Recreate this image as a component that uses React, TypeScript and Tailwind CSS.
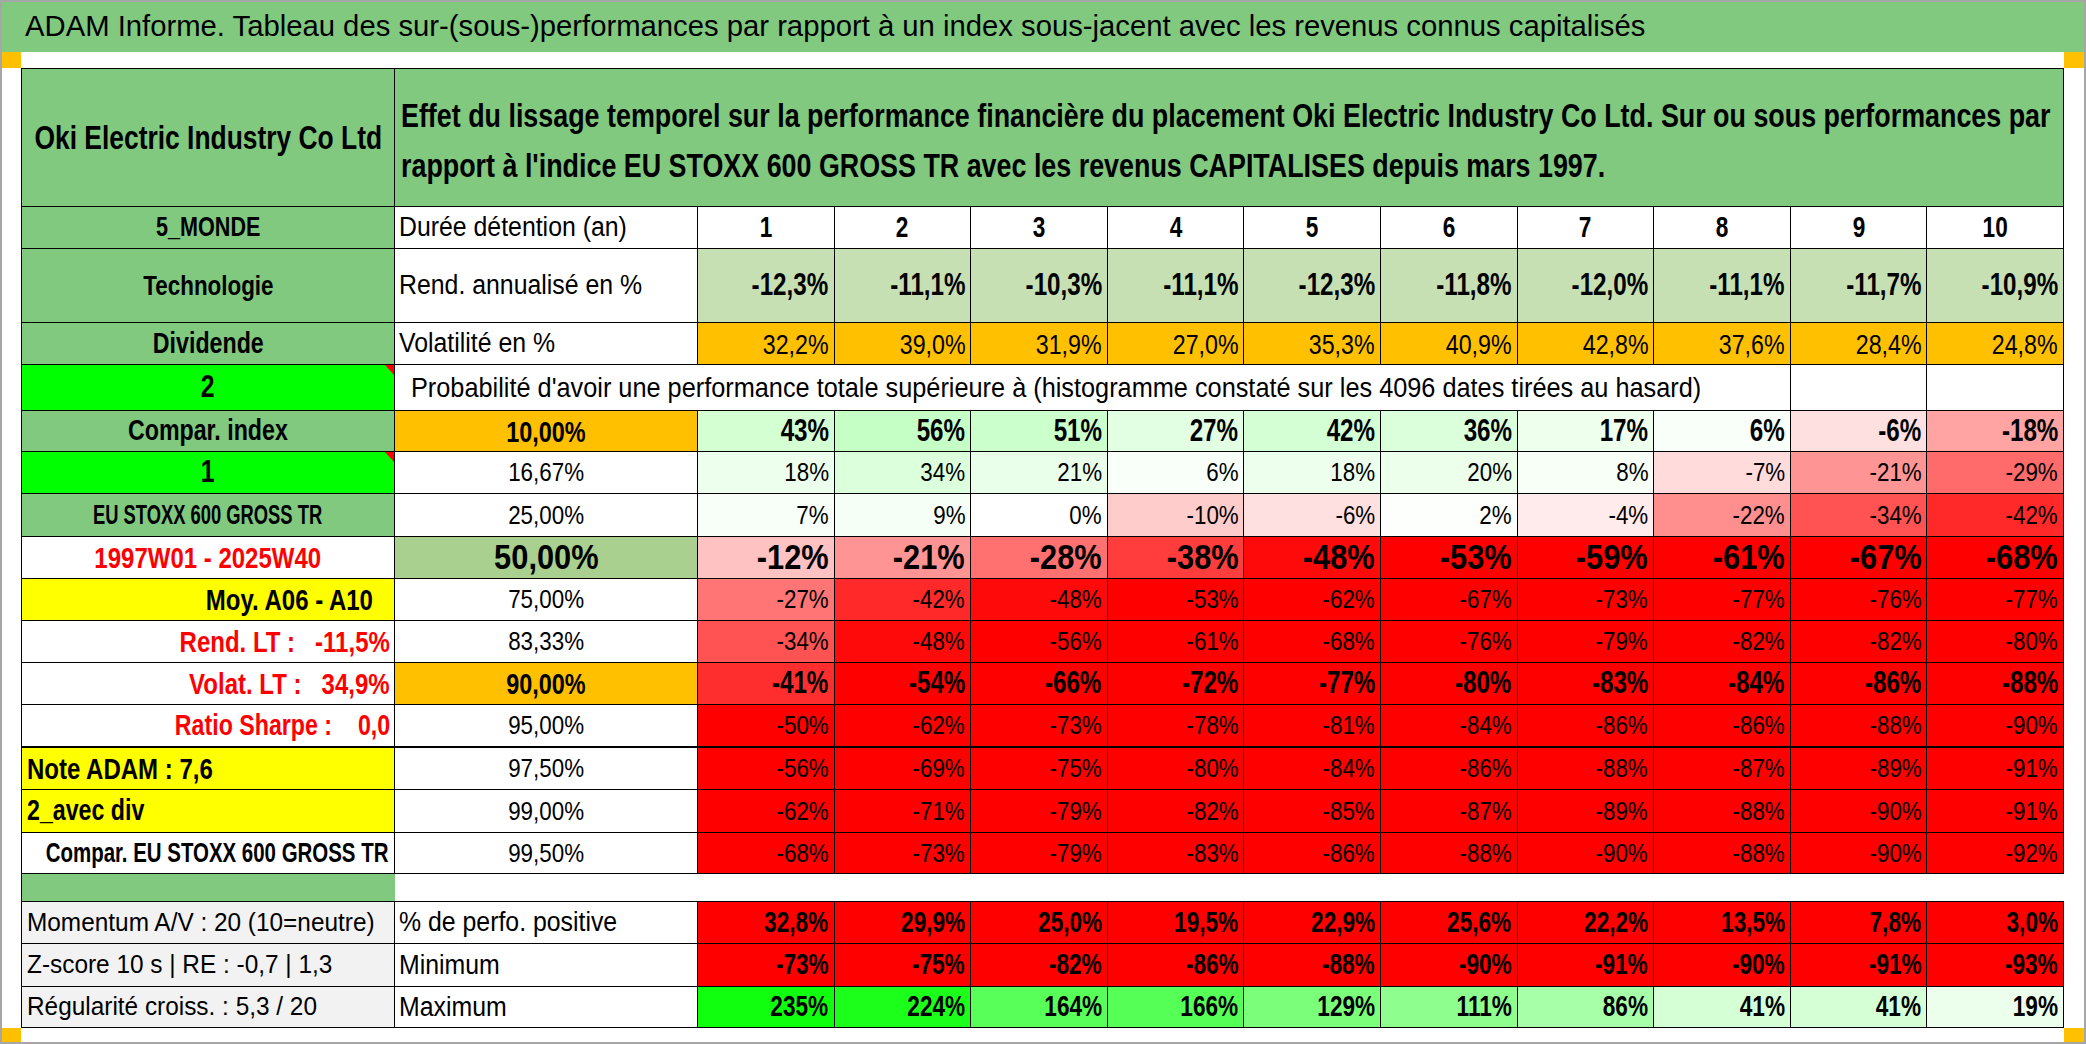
import type { CSSProperties, ReactNode } from "react";
import { twMerge } from "tailwind-merge";

type Align = "l" | "c" | "r";
type Fill = "heat" | "red" | "none";

type Row = {
  label: string;
  labelCls: string;
  labelAlign: Align;
  labelSc?: string;
  flag?: boolean;
  mid: string;
  midCls: string;
  midAlign: Align;
  midSc: string;
  vals: string[];
  valCls: string;
  valSc: string;
  fill: Fill;
  thick?: boolean;
};

// Calibri is narrower than Arial, so text gets squeezed a bit
const BOLD = "scale-x-[0.8]";
const BNUM = "scale-x-[0.78]";
const REG = "scale-x-[0.92]";
const RNUM = "scale-x-[0.86]";

const J = { l: "justify-start", c: "justify-center", r: "justify-end" };
const O = { l: "origin-left", c: "origin-center", r: "origin-right" };

// red below zero, green above, like the sheet's colour scale
function heat(s: string) {
  const v = parseFloat(s.replace(",", "."));
  if (v < 0) {
    const c = Math.round(255 * (1 - Math.min(1, -v / 50)));
    return `rgb(255,${c},${c})`;
  }
  const c = Math.round(255 * (1 - Math.min(1, v / 250)));
  return `rgb(${c},255,${c})`;
}

function Cell({
  className,
  style,
  align = "c",
  sc,
  children,
  extra,
}: {
  className?: string;
  style?: CSSProperties;
  align?: Align;
  sc?: string;
  children?: ReactNode;
  extra?: ReactNode;
}) {
  return (
    <div
      style={style}
      className={twMerge(
        "relative flex items-center overflow-hidden border-b border-r border-black leading-none",
        J[align],
        className
      )}
    >
      {children !== undefined && (
        <span className={twMerge("inline-block shrink-0 whitespace-pre", O[align], sc)}>{children}</span>
      )}
      {extra}
    </div>
  );
}

function Flag() {
  return <span className="absolute right-0 top-0 h-0 w-0 border-l-[9px] border-t-[10px] border-l-transparent border-t-[#ff0000]" />;
}

const rows: Row[] = [
  {
    label: "Compar. index",
    labelCls: "bg-[#80c97f] font-bold text-[29px]",
    labelAlign: "c",
    labelSc: BOLD,
    mid: "10,00%",
    midCls: "bg-[#ffc000] font-bold text-[30px]",
    midAlign: "c",
    midSc: BNUM,
    vals: ["43%", "56%", "51%", "27%", "42%", "36%", "17%", "6%", "-6%", "-18%"],
    valCls: "font-bold text-[31px]",
    valSc: BNUM,
    fill: "heat",
  },
  {
    label: "1",
    labelCls: "bg-[#00ff00] font-bold text-[31px]",
    labelAlign: "c",
    labelSc: BOLD,
    flag: true,
    mid: "16,67%",
    midCls: "text-[26px]",
    midAlign: "c",
    midSc: RNUM,
    vals: ["18%", "34%", "21%", "6%", "18%", "20%", "8%", "-7%", "-21%", "-29%"],
    valCls: "text-[26px]",
    valSc: RNUM,
    fill: "heat",
  },
  {
    label: "EU STOXX 600 GROSS TR",
    labelCls: "bg-[#80c97f] font-bold text-[27px]",
    labelAlign: "c",
    labelSc: "scale-x-[0.68]",
    mid: "25,00%",
    midCls: "text-[26px]",
    midAlign: "c",
    midSc: RNUM,
    vals: ["7%", "9%", "0%", "-10%", "-6%", "2%", "-4%", "-22%", "-34%", "-42%"],
    valCls: "text-[26px]",
    valSc: RNUM,
    fill: "heat",
  },
  {
    label: "1997W01 - 2025W40",
    labelCls: "font-bold text-[30px] text-[#ff0000]",
    labelAlign: "c",
    labelSc: BOLD,
    mid: "50,00%",
    midCls: "bg-[#a9d08e] font-bold text-[35px]",
    midAlign: "c",
    midSc: "scale-x-[0.88]",
    vals: ["-12%", "-21%", "-28%", "-38%", "-48%", "-53%", "-59%", "-61%", "-67%", "-68%"],
    valCls: "font-bold text-[35px]",
    valSc: "scale-x-[0.88]",
    fill: "heat",
  },
  {
    label: "Moy. A06 - A10",
    labelCls: "bg-[#ffff00] pr-[21px] font-bold text-[30px]",
    labelAlign: "r",
    labelSc: BOLD,
    mid: "75,00%",
    midCls: "text-[26px]",
    midAlign: "c",
    midSc: RNUM,
    vals: ["-27%", "-42%", "-48%", "-53%", "-62%", "-67%", "-73%", "-77%", "-76%", "-77%"],
    valCls: "text-[26px]",
    valSc: RNUM,
    fill: "heat",
  },
  {
    label: "Rend. LT :   -11,5%",
    labelCls: "pr-[4px] font-bold text-[30px] text-[#ff0000]",
    labelAlign: "r",
    labelSc: BOLD,
    mid: "83,33%",
    midCls: "text-[26px]",
    midAlign: "c",
    midSc: RNUM,
    vals: ["-34%", "-48%", "-56%", "-61%", "-68%", "-76%", "-79%", "-82%", "-82%", "-80%"],
    valCls: "text-[26px]",
    valSc: RNUM,
    fill: "heat",
  },
  {
    label: "Volat. LT :   34,9%",
    labelCls: "pr-[4px] font-bold text-[30px] text-[#ff0000]",
    labelAlign: "r",
    labelSc: BOLD,
    mid: "90,00%",
    midCls: "bg-[#ffc000] font-bold text-[30px]",
    midAlign: "c",
    midSc: BNUM,
    vals: ["-41%", "-54%", "-66%", "-72%", "-77%", "-80%", "-83%", "-84%", "-86%", "-88%"],
    valCls: "font-bold text-[31px]",
    valSc: BNUM,
    fill: "heat",
  },
  {
    label: "Ratio Sharpe :    0,0",
    labelCls: "pr-[4px] font-bold text-[29px] text-[#ff0000]",
    labelAlign: "r",
    labelSc: BOLD,
    mid: "95,00%",
    midCls: "text-[26px]",
    midAlign: "c",
    midSc: RNUM,
    vals: ["-50%", "-62%", "-73%", "-78%", "-81%", "-84%", "-86%", "-86%", "-88%", "-90%"],
    valCls: "text-[26px]",
    valSc: RNUM,
    fill: "heat",
    thick: true,
  },
  {
    label: "Note ADAM : 7,6",
    labelCls: "bg-[#ffff00] pl-[5px] font-bold text-[30px]",
    labelAlign: "l",
    labelSc: BOLD,
    mid: "97,50%",
    midCls: "text-[26px]",
    midAlign: "c",
    midSc: RNUM,
    vals: ["-56%", "-69%", "-75%", "-80%", "-84%", "-86%", "-88%", "-87%", "-89%", "-91%"],
    valCls: "text-[26px]",
    valSc: RNUM,
    fill: "heat",
  },
  {
    label: "2_avec div",
    labelCls: "bg-[#ffff00] pl-[5px] font-bold text-[29px]",
    labelAlign: "l",
    labelSc: BOLD,
    mid: "99,00%",
    midCls: "text-[26px]",
    midAlign: "c",
    midSc: RNUM,
    vals: ["-62%", "-71%", "-79%", "-82%", "-85%", "-87%", "-89%", "-88%", "-90%", "-91%"],
    valCls: "text-[26px]",
    valSc: RNUM,
    fill: "heat",
  },
  {
    label: "Compar. EU STOXX 600 GROSS TR",
    labelCls: "pr-[6px] font-bold text-[28px]",
    labelAlign: "r",
    labelSc: "scale-x-[0.73]",
    mid: "99,50%",
    midCls: "text-[26px]",
    midAlign: "c",
    midSc: RNUM,
    vals: ["-68%", "-73%", "-79%", "-83%", "-86%", "-88%", "-90%", "-88%", "-90%", "-92%"],
    valCls: "text-[26px]",
    valSc: RNUM,
    fill: "heat",
  },
];

const stats: Row[] = [
  {
    label: "Momentum A/V : 20 (10=neutre)",
    labelCls: "bg-[#f2f2f2] pl-[5px] text-[26.5px]",
    labelAlign: "l",
    labelSc: REG,
    mid: "% de perfo. positive",
    midCls: "pl-[4px] text-[27px]",
    midAlign: "l",
    midSc: REG,
    vals: ["32,8%", "29,9%", "25,0%", "19,5%", "22,9%", "25,6%", "22,2%", "13,5%", "7,8%", "3,0%"],
    valCls: "font-bold text-[29px]",
    valSc: BNUM,
    fill: "red",
  },
  {
    label: "Z-score 10 s | RE : -0,7 | 1,3",
    labelCls: "bg-[#f2f2f2] pl-[5px] text-[26.5px]",
    labelAlign: "l",
    labelSc: REG,
    mid: "Minimum",
    midCls: "pl-[4px] text-[27px]",
    midAlign: "l",
    midSc: REG,
    vals: ["-73%", "-75%", "-82%", "-86%", "-88%", "-90%", "-91%", "-90%", "-91%", "-93%"],
    valCls: "font-bold text-[29px]",
    valSc: BNUM,
    fill: "red",
  },
  {
    label: "Régularité croiss. : 5,3 / 20",
    labelCls: "bg-[#f2f2f2] pl-[5px] text-[26.5px]",
    labelAlign: "l",
    labelSc: REG,
    mid: "Maximum",
    midCls: "pl-[4px] text-[27px]",
    midAlign: "l",
    midSc: REG,
    vals: ["235%", "224%", "164%", "166%", "129%", "111%", "86%", "41%", "41%", "19%"],
    valCls: "font-bold text-[29px]",
    valSc: BNUM,
    fill: "heat",
  },
];

const techno = ["-12,3%", "-11,1%", "-10,3%", "-11,1%", "-12,3%", "-11,8%", "-12,0%", "-11,1%", "-11,7%", "-10,9%"];
const vola = ["32,2%", "39,0%", "31,9%", "27,0%", "35,3%", "40,9%", "42,8%", "37,6%", "28,4%", "24,8%"];

function TableRow({ r }: { r: Row }) {
  const b = r.thick ? "border-b-2" : "";
  return (
    <>
      <Cell className={twMerge(r.labelCls, b)} align={r.labelAlign} sc={r.labelSc} extra={r.flag && <Flag />}>
        {r.label}
      </Cell>
      <Cell className={twMerge(r.midCls, b)} align={r.midAlign} sc={r.midSc}>
        {r.mid}
      </Cell>
      {r.vals.map((v, i) => (
        <Cell
          key={i}
          align="r"
          sc={r.valSc}
          className={twMerge("pr-[5px]", r.valCls, r.fill === "red" && "bg-[#ff0000]", b)}
          style={r.fill === "heat" ? { backgroundColor: heat(v) } : undefined}
        >
          {v}
        </Cell>
      ))}
    </>
  );
}

function Gutter() {
  return (
    <div className="flex flex-col justify-between">
      <div className="h-[16px] bg-[#ffc000]" />
      <div className="h-[14px] bg-[#ffc000]" />
    </div>
  );
}

export default function App() {
  return (
    <div className="flex h-[1044px] w-[2086px] flex-col overflow-hidden border-2 border-[#a6a6a6] bg-white font-['Liberation_Sans',Arial,sans-serif] text-black">
      <div className="flex h-[50px] shrink-0 items-center bg-[#80c97f] pl-[23px] text-[29.25px]">
        ADAM Informe. Tableau des sur-(sous-)performances par rapport à un index sous-jacent avec les revenus connus capitalisés
      </div>

      <div className="grid flex-1 grid-cols-[19px_2043px_20px]">
        <Gutter />
        <div className="flex flex-col">
          <div className="h-[16px]" />
          <div className="grid grid-cols-[373px_303px_repeat(10,minmax(0,1fr))] grid-rows-[138px_42px_74px_42px_46px_41px_42px_43px_42px_42px_42px_42px_43px_42px_43px_41px_28px_42px_43px_41px] border-l border-t border-black">
            {/* header */}
            <Cell className="bg-[#80c97f] text-[33px] font-bold" sc={BOLD}>
              Oki Electric Industry Co Ltd
            </Cell>
            <div className="col-span-11 flex flex-col justify-center overflow-hidden border-b border-r border-black bg-[#80c97f] pl-[6px] pt-[6px] text-[33.6px] font-bold leading-[50px]">
              <span className="origin-left scale-x-[0.8] whitespace-nowrap">
                Effet du lissage temporel sur la performance financière du placement Oki Electric Industry Co Ltd. Sur ou sous performances par
              </span>
              <span className="origin-left scale-x-[0.8] whitespace-nowrap">
                rapport à l'indice EU STOXX 600 GROSS TR avec les revenus CAPITALISES depuis mars 1997.
              </span>
            </div>

            <Cell className="bg-[#80c97f] text-[27px] font-bold" sc={BOLD}>
              5_MONDE
            </Cell>
            <Cell className="pl-[4px] text-[27px]" align="l" sc={REG}>
              Durée détention (an)
            </Cell>
            {[1, 2, 3, 4, 5, 6, 7, 8, 9, 10].map((n) => (
              <Cell key={n} className="text-[29px] font-bold" sc={BNUM}>
                {n}
              </Cell>
            ))}

            <Cell className="bg-[#80c97f] text-[28px] font-bold" sc={BOLD}>
              Technologie
            </Cell>
            <Cell className="pl-[4px] text-[27px]" align="l" sc={REG}>
              Rend. annualisé en %
            </Cell>
            {techno.map((v, i) => (
              <Cell key={i} align="r" sc={BNUM} className="bg-[#c6e0b4] pr-[5px] text-[31px] font-bold">
                {v}
              </Cell>
            ))}

            <Cell className="bg-[#80c97f] text-[29px] font-bold" sc={BOLD}>
              Dividende
            </Cell>
            <Cell className="pl-[4px] text-[27px]" align="l" sc={REG}>
              Volatilité en %
            </Cell>
            {vola.map((v, i) => (
              <Cell key={i} align="r" sc={RNUM} className="bg-[#ffc000] pr-[5px] pt-[4px] text-[27px]">
                {v}
              </Cell>
            ))}

            <Cell className="bg-[#00ff00] text-[31px] font-bold" sc={BOLD} extra={<Flag />}>
              2
            </Cell>
            <Cell className="col-span-9 pl-[16px] text-[27.5px]" align="l" sc={REG}>
              Probabilité d'avoir une performance totale supérieure à (histogramme constaté sur les 4096 dates tirées au hasard)
            </Cell>
            <Cell />
            <Cell />

            {rows.map((r) => (
              <TableRow key={r.label} r={r} />
            ))}

            {/* blank separator row */}
            <div className="border-b border-black bg-[#80c97f]" />
            <div className="col-span-11 border-b border-black" />

            {stats.map((r) => (
              <TableRow key={r.label} r={r} />
            ))}
          </div>
        </div>
        <Gutter />
      </div>
    </div>
  );
}
